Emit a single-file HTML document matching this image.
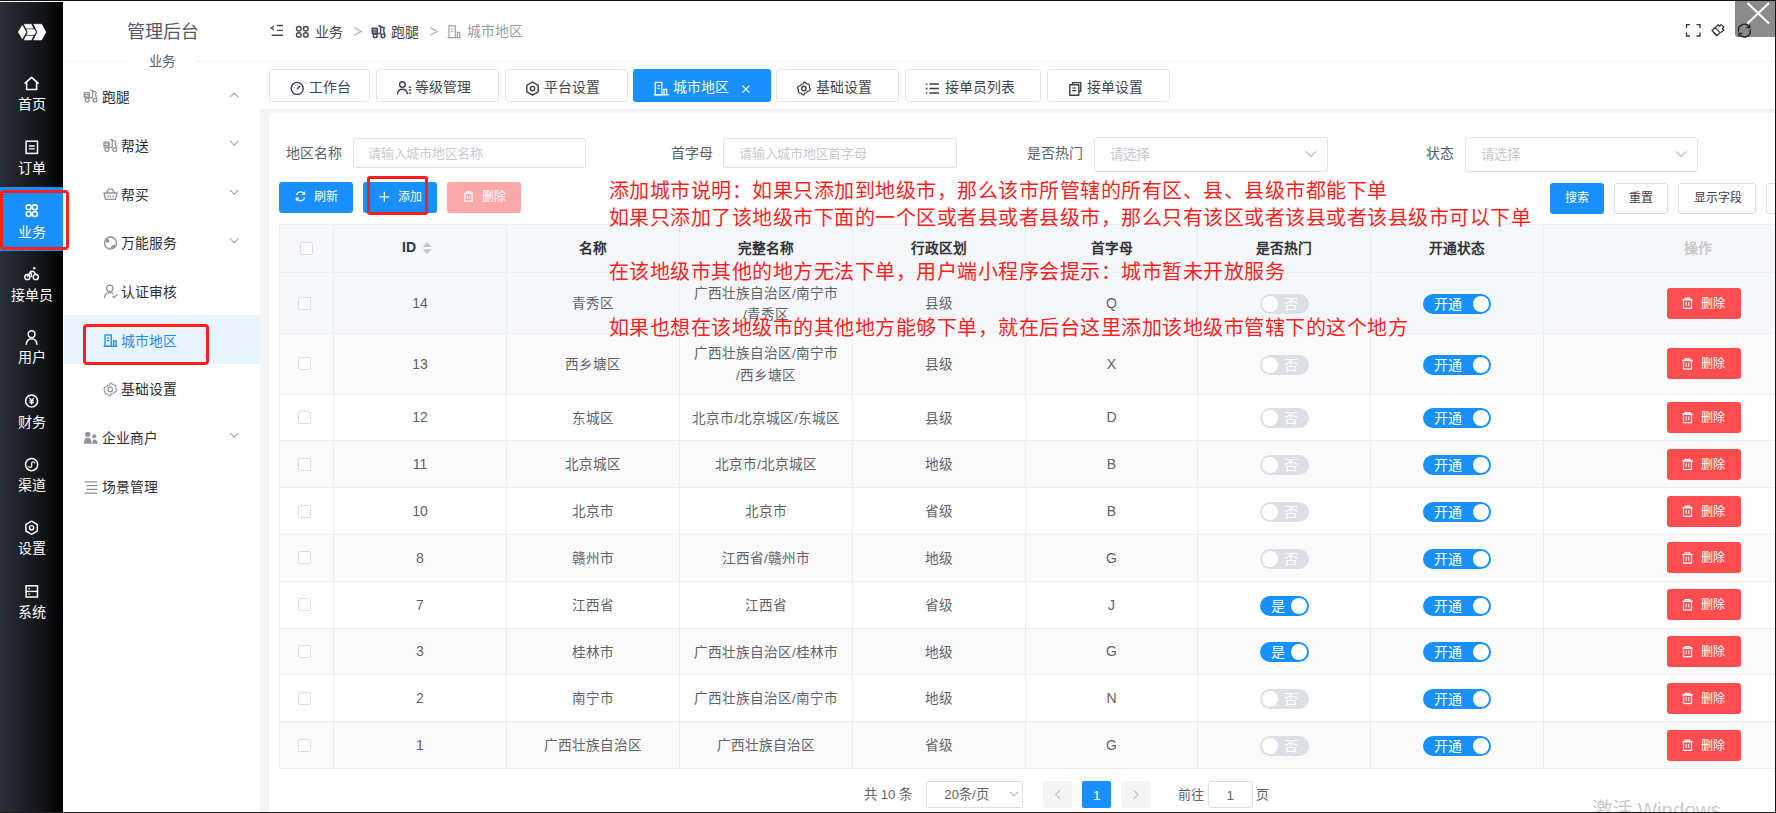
<!DOCTYPE html>
<html lang="zh-CN">
<head>
<meta charset="utf-8">
<title>城市地区</title>
<style>
*{box-sizing:border-box;margin:0;padding:0}
html,body{width:1776px;height:813px;overflow:hidden;background:#fff}
body{position:relative;font-family:"Liberation Sans",sans-serif;color:#606266;font-size:14px}
.a{position:absolute}
.t{position:absolute;white-space:nowrap;line-height:1}
</style>
</head>
<body>
<div class="a" style="left:0px;top:0px;width:1776px;height:1px;background:#141414"></div>
<div class="a" style="left:0px;top:2px;width:63px;height:810px;background:linear-gradient(to right,#2b2f38 0%,#1d2027 35%,#111316 70%,#000 100%)"></div>
<svg class="a" style="left:0px;top:0px;" width="63" height="60" viewBox="0 0 63 60" fill="none"><g fill="#fff" stroke="#fff" stroke-width="0.6" stroke-linejoin="round">
<polygon points="18.3,32.1 22.3,25.4 26.0,32.1 22.3,38.8"/>
<polygon points="24.2,24.3 31.2,24.3 33.1,28.2 26.0,28.2"/>
<polygon points="26.8,29.5 34.3,29.5 35.8,32.1 34.3,34.7 26.8,34.7 27.8,32.1"/>
<polygon points="26.0,36.0 33.1,36.0 31.2,39.9 24.2,39.9"/>
<polygon points="33.7,24.3 41.6,24.3 45.9,32.1 41.6,39.9 33.7,39.9 37.6,32.1"/>
</g></svg>
<div class="a" style="left:0px;top:187px;width:63px;height:64px;background:#1890ff"></div>
<svg class="a" style="left:0px;top:0px;" width="63" height="813" viewBox="0 0 63 813" fill="none"><path d="M24.6 83.6 L31.6 77.4 L38.6 83.6 M26.6 82.2 V89.5 H36.6 V82.2" stroke="#fff" stroke-width="1.6" stroke-linejoin="round"/><rect x="26.1" y="141.2" width="11.4" height="12.2" stroke="#fff" stroke-width="1.5"/><path d="M28.8 146 H34.8 M28.8 148.8 H34.8" stroke="#fff" stroke-width="1.3"/><g stroke="#fff" stroke-width="1.5"><circle cx="28.6" cy="207.2" r="2.5"/><circle cx="34.8" cy="207.2" r="2.5"/><circle cx="28.6" cy="214" r="2.5"/><circle cx="34.8" cy="214" r="2.5"/></g><g stroke="#fff" stroke-width="1.5"><circle cx="27.4" cy="277" r="2.6"/><circle cx="35.8" cy="277" r="2.6"/></g><circle cx="34.3" cy="268.2" r="1.3" fill="#fff"/><path d="M27.4 277 L30.6 271.3 L33.6 271.6 L35.8 274.2 M30.6 271.3 L31.8 277" stroke="#fff" stroke-width="1.5" stroke-linejoin="round"/><g stroke="#fff" stroke-width="1.5"><circle cx="31.6" cy="334.2" r="3.4"/><path d="M26.2 344.8 C26.6 340.5 28.8 338.8 31.6 338.8 C34.4 338.8 36.6 340.5 37 344.8"/></g><circle cx="31.6" cy="401" r="6" stroke="#fff" stroke-width="1.6"/><path d="M29.3 397.8 L31.6 400.6 L33.9 397.8 M31.6 400.6 V404.5 M29.4 400.9 H33.8 M29.4 402.7 H33.8" stroke="#fff" stroke-width="1.2"/><circle cx="31.6" cy="464.6" r="6.1" stroke="#fff" stroke-width="1.6"/><path d="M28.6 465.9 A1.55 1.55 0 1 0 31.7 465.9 V463.3 A1.55 1.55 0 1 1 34.8 463.3" stroke="#fff" stroke-width="1.2" fill="none"/><polygon points="31.6,521.2 37.3,524.5 37.3,531 31.6,534.3 25.9,531 25.9,524.5" stroke="#fff" stroke-width="1.5" stroke-linejoin="round"/><circle cx="31.6" cy="527.7" r="2.1" stroke="#fff" stroke-width="1.4"/><rect x="26.1" y="585.8" width="11.4" height="11.2" stroke="#fff" stroke-width="1.5"/><path d="M26.1 591.4 H37.5" stroke="#fff" stroke-width="1.4"/><path d="M28.5 588.6 H30 M28.5 594.2 H30" stroke="#fff" stroke-width="1.2"/></svg>
<div class="t" style="left:-268.4px;width:600px;text-align:center;top:96.5px;font-size:14px;color:#fff;font-weight:400;">首页</div>
<div class="t" style="left:-268.4px;width:600px;text-align:center;top:160.5px;font-size:14px;color:#fff;font-weight:400;">订单</div>
<div class="t" style="left:-268.4px;width:600px;text-align:center;top:224.5px;font-size:14px;color:#fff;font-weight:400;">业务</div>
<div class="t" style="left:-268.4px;width:600px;text-align:center;top:287.5px;font-size:14px;color:#fff;font-weight:400;">接单员</div>
<div class="t" style="left:-268.4px;width:600px;text-align:center;top:350px;font-size:14px;color:#fff;font-weight:400;">用户</div>
<div class="t" style="left:-268.4px;width:600px;text-align:center;top:414.5px;font-size:14px;color:#fff;font-weight:400;">财务</div>
<div class="t" style="left:-268.4px;width:600px;text-align:center;top:477.5px;font-size:14px;color:#fff;font-weight:400;">渠道</div>
<div class="t" style="left:-268.4px;width:600px;text-align:center;top:541px;font-size:14px;color:#fff;font-weight:400;">设置</div>
<div class="t" style="left:-268.4px;width:600px;text-align:center;top:604.5px;font-size:14px;color:#fff;font-weight:400;">系统</div>
<div class="a" style="left:63px;top:2px;width:197px;height:810px;background:#fff"></div>
<div class="a" style="left:259.5px;top:2px;width:1px;height:810px;background:#f0f1f4"></div>
<div class="t" style="left:127px;top:22.5px;font-size:18px;color:#4f586b;font-weight:400;">管理后台</div>
<div class="a" style="left:65px;top:61px;width:63px;height:1px;background:#f2f3f5"></div>
<div class="a" style="left:196px;top:61px;width:64px;height:1px;background:#f2f3f5"></div>
<div class="t" style="left:148.5px;top:55px;font-size:13.5px;color:#5c6270;font-weight:400;">业务</div>
<div class="a" style="left:63.5px;top:315px;width:196px;height:49px;background:#e8f4fe"></div>
<svg class="a" style="left:0px;top:0px;" width="263" height="813" viewBox="0 0 263 813" fill="none"><g stroke="#8f939a" stroke-width="1.25" fill="none" stroke-linejoin="round" stroke-linecap="round"><rect x="84.3" y="92.7" width="5" height="5.1"/><path d="M84.3 94.5 H89.3 M84.3 96.2 H89.3" stroke-width="1.0"/><path d="M90.8 90.3 H92.6 V97.8 H89.3"/><path d="M92.6 91.1 L96.2 92.2 L95.5 94.6 L96.8 99.0"/><circle cx="87.2" cy="100.2" r="1.9"/><circle cx="95.0" cy="100.2" r="1.9"/></g><g stroke="#8f939a" stroke-width="1.25" fill="none" stroke-linejoin="round" stroke-linecap="round"><rect x="104.0" y="142.0" width="5" height="5.1"/><path d="M104.0 143.8 H109.0 M104.0 145.5 H109.0" stroke-width="1.0"/><path d="M110.5 139.60000000000002 H112.3 V147.10000000000002 H109.0"/><path d="M112.3 140.4 L115.9 141.5 L115.2 143.9 L116.5 148.3"/><circle cx="106.9" cy="149.5" r="1.9"/><circle cx="114.7" cy="149.5" r="1.9"/></g><g stroke="#8f939a" stroke-width="1.3" fill="none" stroke-linejoin="round"><path d="M104 193 H117 L115.6 199.4 H105.4 Z"/><path d="M106.5 193 L108.8 189.2 H112.2 L114.5 193"/><path d="M108 195.2 V197.4 M110.5 195.2 V197.4 M113 195.2 V197.4" stroke-width="1.1"/></g><circle cx="110.5" cy="243" r="6" stroke="#8f939a" stroke-width="1.4"/><path d="M106 239.5 C108 238.5 110 239.5 109.5 241.5 C109 243 107 242.5 105.6 242.2 Z M111 247.5 C111.5 245.5 113.5 244.5 115.5 245 C115 247 113.5 248.5 111 248.8 Z" fill="#8f939a"/><g stroke="#8f939a" stroke-width="1.3" fill="none"><circle cx="109.8" cy="288.3" r="3.2"/><path d="M104.5 298 C104.8 294.5 107 292.6 109.8 292.6 C111.4 292.6 112.6 293 113.5 293.8"/><path d="M112.6 296 L114.2 297.6 L117.3 294.3"/></g><g stroke="#1890ff" stroke-width="1.3" fill="none"><path d="M103.6 346.3 H117.4"/><rect x="105" y="335" width="6.3" height="11.3"/><path d="M107 338 H109.5 M107 340.6 H109.5" stroke-width="1.1"/><path d="M113.6 346.3 V341 H116 V346.3"/></g><g stroke="#8f939a" stroke-width="1.3" fill="none"><path d="M110.3 383 L112 383.6 L113.2 385 L115 385.1 L116 386.8 L115.8 388.6 L116.8 390.2 L115.8 391.9 L114 392.2 L112.9 393.8 L111 394 L110.3 396 L108.6 395.4 L107.4 394 L105.6 393.9 L104.6 392.2 L104.8 390.4 L103.8 388.8 L104.8 387.1 L106.6 386.8 L107.7 385.2 L109.6 385 Z" stroke-width="1.1"/><circle cx="110.3" cy="389.5" r="2.3"/></g><g fill="#8f939a"><circle cx="87.8" cy="434.3" r="2.6"/><path d="M84 443.8 C84 439.5 85.5 437.8 87.8 437.8 C90.1 437.8 91.6 439.5 91.6 443.8 Z"/><circle cx="94.2" cy="436.3" r="2"/><path d="M92.4 443.8 C92.4 440.6 93 439.4 94.5 439.4 C96.2 439.4 97.4 440.6 97.4 443.8 Z"/></g><g stroke="#8f939a" stroke-width="1.3"><path d="M84.5 481.8 H97.3 M86.5 485.6 H97.3 M86.5 489.4 H97.3 M84.5 493.2 H97.3"/></g></svg>
<div class="t" style="left:102px;top:90.5px;font-size:13.8px;color:#2b2d31;font-weight:400;">跑腿</div>
<svg class="a" style="left:0px;top:0px;" width="263" height="813" viewBox="0 0 263 813" fill="none"><path d="M230 97.2 L234.2 93.0 L238.4 97.2" stroke="#a3a6ad" stroke-width="1.1" fill="none"/></svg>
<div class="t" style="left:121px;top:139.5px;font-size:13.8px;color:#2b2d31;font-weight:400;">帮送</div>
<svg class="a" style="left:0px;top:0px;" width="263" height="813" viewBox="0 0 263 813" fill="none"><path d="M230 140.9 L234.2 145.1 L238.4 140.9" stroke="#a3a6ad" stroke-width="1.1" fill="none"/></svg>
<div class="t" style="left:121px;top:188.5px;font-size:13.8px;color:#2b2d31;font-weight:400;">帮买</div>
<svg class="a" style="left:0px;top:0px;" width="263" height="813" viewBox="0 0 263 813" fill="none"><path d="M230 189.9 L234.2 194.1 L238.4 189.9" stroke="#a3a6ad" stroke-width="1.1" fill="none"/></svg>
<div class="t" style="left:121px;top:237px;font-size:13.8px;color:#2b2d31;font-weight:400;">万能服务</div>
<svg class="a" style="left:0px;top:0px;" width="263" height="813" viewBox="0 0 263 813" fill="none"><path d="M230 238.4 L234.2 242.6 L238.4 238.4" stroke="#a3a6ad" stroke-width="1.1" fill="none"/></svg>
<div class="t" style="left:121px;top:286px;font-size:13.8px;color:#2b2d31;font-weight:400;">认证审核</div>
<div class="t" style="left:121px;top:334.5px;font-size:13.8px;color:#1890ff;font-weight:400;">城市地区</div>
<div class="t" style="left:121px;top:383px;font-size:13.8px;color:#2b2d31;font-weight:400;">基础设置</div>
<div class="t" style="left:102px;top:431.5px;font-size:13.8px;color:#2b2d31;font-weight:400;">企业商户</div>
<svg class="a" style="left:0px;top:0px;" width="263" height="813" viewBox="0 0 263 813" fill="none"><path d="M230 432.90000000000003 L234.2 437.1 L238.4 432.90000000000003" stroke="#a3a6ad" stroke-width="1.1" fill="none"/></svg>
<div class="t" style="left:102px;top:480.5px;font-size:13.8px;color:#2b2d31;font-weight:400;">场景管理</div>
<div class="a" style="left:83.2px;top:324px;width:125.6px;height:40.8px;border:3px solid #ff1e1e;border-radius:4px"></div>
<div class="a" style="left:0px;top:189.5px;width:69px;height:60px;border:3px solid #ff1f1f;border-radius:4px"></div>
<div class="a" style="left:260px;top:1px;width:1515px;height:60px;background:#fff"></div>
<div class="a" style="left:260px;top:60.5px;width:1515px;height:1px;background:#f0f1f3"></div>
<svg class="a" style="left:0px;top:0px;" width="1776" height="120" viewBox="0 0 1776 120" fill="none"><g stroke="#464c58" stroke-width="1.4" fill="none"><path d="M274 26.3 L271 28 L274 29.8" stroke-linejoin="round"/><path d="M276.8 25.5 H283 M276.8 30.4 H283 M271.6 35.3 H283"/></g><g stroke="#464c58" stroke-width="1.5" fill="none"><circle cx="298.8" cy="28.8" r="2.3"/><circle cx="305.8" cy="28.8" r="2.3"/><circle cx="298.8" cy="35" r="2.3"/><circle cx="305.8" cy="35" r="2.3"/></g><g stroke="#464c58" stroke-width="1.5" fill="none" stroke-linejoin="round" stroke-linecap="round"><rect x="372.3" y="28.3" width="5" height="5.1"/><path d="M372.3 30.1 H377.3 M372.3 31.8 H377.3" stroke-width="1.2000000000000002"/><path d="M378.8 25.900000000000002 H380.6 V33.4 H377.3"/><path d="M380.6 26.700000000000003 L384.2 27.8 L383.5 30.200000000000003 L384.8 34.6"/><circle cx="375.2" cy="35.8" r="1.9"/><circle cx="383.0" cy="35.8" r="1.9"/></g><g stroke="#a9b4c4" stroke-width="1.2" fill="none"><path d="M354.3 27.6 L361.2 31.4 L354.3 35.2"/><path d="M430.3 27.6 L437.2 31.4 L430.3 35.2"/></g><g stroke="#9aa3b0" stroke-width="1.2" fill="none"><path d="M447.6 37.6 H461.2"/><rect x="449" y="25.8" width="6.3" height="11.8"/><path d="M451 29 H453.4 M451 31.7 H453.4" stroke-width="1"/><path d="M457.4 37.6 V32.3 H459.8 V37.6"/></g><g stroke="#3c3c3c" stroke-width="1.4" fill="none"><path d="M1686.5 28 V24.6 H1690 M1696.5 24.6 H1700 V28 M1700 32.5 V36 H1696.5 M1690 36 H1686.5 V32.5"/></g><g stroke="#3c3c3c" stroke-width="1.3" fill="none" stroke-linejoin="round"><path d="M1712 30.5 L1716.8 35.8 L1720 32.6 L1715 27.4 Z"/><path d="M1713.8 32.4 L1716.8 35.6" /><path d="M1715.2 27.6 L1718.2 24.6 L1719.6 26 L1721.2 24.6 L1723.8 27.2 L1722.4 28.8 L1724 30.2 L1720.4 32.8"/></g></svg>
<div class="t" style="left:314.5px;top:24.6px;font-size:14px;color:#3d4350;font-weight:400;">业务</div>
<div class="t" style="left:390.7px;top:24.6px;font-size:14px;color:#3d4350;font-weight:400;">跑腿</div>
<div class="t" style="left:466.7px;top:24.6px;font-size:13.8px;color:#97a0ad;font-weight:400;">城市地区</div>
<div class="a" style="left:1734.7px;top:1px;width:40.3px;height:35.7px;background:rgba(110,110,110,0.8);border-bottom-left-radius:3px"></div>
<svg class="a" style="left:1734px;top:0px;" width="42" height="40" viewBox="0 0 42 40" fill="none"><path d="M13.5 3 L35 23.5 M35 3 L13.5 23.5" stroke="#fff" stroke-width="2.2"/></svg>
<svg class="a" style="left:0px;top:0px;" width="1776" height="60" viewBox="0 0 1776 60" fill="none"><g stroke="#222" stroke-width="1.4" fill="none"><path d="M1738.6 31.5 A5.8 5.8 0 0 1 1749 26.8"/><path d="M1750 29.5 A5.8 5.8 0 0 1 1739.8 34.6"/><path d="M1749.6 24.4 V27.6 H1746.4" /><path d="M1739 36.4 V33.4 H1742.2"/></g></svg>
<div class="a" style="left:260px;top:61.5px;width:1515px;height:48.5px;background:#fff"></div>
<div class="a" style="left:260px;top:109px;width:1515px;height:3.5px;background:linear-gradient(#eceef1,#f3f4f6)"></div>
<div class="a" style="left:269px;top:69.3px;width:101.39999999999998px;height:32.7px;background:#fff;border:1px solid #e3e6eb;border-radius:3px"></div>
<div class="t" style="left:309px;top:81px;font-size:13.9px;color:#41464f;font-weight:400;">工作台</div>
<div class="a" style="left:376px;top:69.3px;width:123.30000000000001px;height:32.7px;background:#fff;border:1px solid #e3e6eb;border-radius:3px"></div>
<div class="t" style="left:415px;top:81px;font-size:13.9px;color:#41464f;font-weight:400;">等级管理</div>
<div class="a" style="left:504.8px;top:69.3px;width:123.09999999999997px;height:32.7px;background:#fff;border:1px solid #e3e6eb;border-radius:3px"></div>
<div class="t" style="left:544.3px;top:81px;font-size:13.9px;color:#41464f;font-weight:400;">平台设置</div>
<div class="a" style="left:633.4px;top:69.3px;width:137.39999999999998px;height:32.7px;background:#1890ff;border-radius:3px"></div>
<div class="t" style="left:672.9px;top:81px;font-size:13.9px;color:#fff;font-weight:400;">城市地区</div>
<div class="a" style="left:776.3px;top:69.3px;width:122.90000000000009px;height:32.7px;background:#fff;border:1px solid #e3e6eb;border-radius:3px"></div>
<div class="t" style="left:815.7px;top:81px;font-size:13.9px;color:#41464f;font-weight:400;">基础设置</div>
<div class="a" style="left:905px;top:69.3px;width:136.20000000000005px;height:32.7px;background:#fff;border:1px solid #e3e6eb;border-radius:3px"></div>
<div class="t" style="left:944.6px;top:81px;font-size:13.9px;color:#41464f;font-weight:400;">接单员列表</div>
<div class="a" style="left:1047.3px;top:69.3px;width:123.0px;height:32.7px;background:#fff;border:1px solid #e3e6eb;border-radius:3px"></div>
<div class="t" style="left:1086.9px;top:81px;font-size:13.9px;color:#41464f;font-weight:400;">接单设置</div>
<svg class="a" style="left:0px;top:0.7px;" width="1776" height="120" viewBox="0 0 1776 120" fill="none"><g stroke="#3a3f48" stroke-width="1.4" fill="none"><circle cx="297.2" cy="87.4" r="6"/><path d="M297.2 88 L300 85" stroke-width="1.6"/><path d="M293.8 86.5 L294.6 86.8 M295 84.4 L295.5 85 M297.2 83.6 V84.4" stroke-width="1"/></g><g stroke="#3a3f48" stroke-width="1.4" fill="none"><circle cx="402.4" cy="83.6" r="2.8"/><path d="M397.4 93.4 C397.6 89.8 399.6 88.2 402.4 88.2 C405.2 88.2 407.2 89.8 407.4 93.4"/><path d="M408.6 86.2 H411.2 M408.6 89.2 H411.2 M408.6 92.2 H411.2" stroke-width="1.3"/></g><g stroke="#3a3f48" stroke-width="1.4" fill="none"><polygon points="532.5,81 538.2,84.3 538.2,90.9 532.5,94.2 526.8,90.9 526.8,84.3" stroke-linejoin="round"/><circle cx="532.5" cy="87.6" r="2.2"/></g><g stroke="#fff" stroke-width="1.3" fill="none"><path d="M653.8 93.8 H668.6"/><rect x="655.3" y="81.4" width="6.5" height="12.4"/><path d="M657.4 84.6 H659.8 M657.4 87.4 H659.8" stroke-width="1.1"/><path d="M664 93.8 V88.4 H666.6 V93.8"/></g><path d="M742.4 84.6 L749.4 91.6 M749.4 84.6 L742.4 91.6" stroke="#fff" stroke-width="1.2"/><g stroke="#3a3f48" stroke-width="1.2" fill="none"><path d="M803.9 81 L805.6 81.6 L806.8 83 L808.6 83.1 L809.6 84.8 L809.4 86.6 L810.4 88.2 L809.4 89.9 L807.6 90.2 L806.5 91.8 L804.6 92 L803.9 94 L802.2 93.4 L801 92 L799.2 91.9 L798.2 90.2 L798.4 88.4 L797.4 86.8 L798.4 85.1 L800.2 84.8 L801.3 83.2 L803.2 83 Z"/><circle cx="803.9" cy="87.5" r="2.2" stroke-width="1.4"/></g><g stroke="#3a3f48" stroke-width="1.5" fill="none"><path d="M926.6 82.4 V83.8 M926.6 86.8 V88.2 M926.6 91.2 V92.6" stroke-width="1.7"/><path d="M929.4 83.1 H939 M929.4 87.5 H939 M929.4 91.9 H939"/></g><g stroke="#3a3f48" stroke-width="1.4" fill="none" stroke-linejoin="round"><path d="M1072.6 83.6 V81.6 H1080.8 V90.2 H1078.8"/><rect x="1069.8" y="83.8" width="9" height="10.4"/><path d="M1072.2 87 H1076.2 M1072.2 89.6 H1076.2" stroke-width="1.2"/></g></svg>
<div class="a" style="left:260px;top:112.5px;width:1515px;height:699.5px;background:#f3f4f6"></div>
<div class="a" style="left:269px;top:112.5px;width:1506px;height:699.5px;background:#fff"></div>
<div class="t" style="left:286px;top:146.8px;font-size:13.9px;color:#5a5f69;font-weight:400;">地区名称</div>
<div class="a" style="left:352.5px;top:138px;width:233.29999999999995px;height:30.400000000000006px;background:#fff;border:1px solid #dfe2e8;border-radius:3px"></div>
<div class="t" style="left:368px;top:146.8px;font-size:13px;color:#c8cbd1;font-weight:400;letter-spacing:-0.25px">请输入城市地区名称</div>
<div class="t" style="left:670.5px;top:146.8px;font-size:13.9px;color:#5a5f69;font-weight:400;">首字母</div>
<div class="a" style="left:723.4px;top:138px;width:233.60000000000002px;height:30.400000000000006px;background:#fff;border:1px solid #dfe2e8;border-radius:3px"></div>
<div class="t" style="left:739px;top:146.8px;font-size:13px;color:#c8cbd1;font-weight:400;letter-spacing:-0.25px">请输入城市地区首字母</div>
<div class="t" style="left:1027.4px;top:146.6px;font-size:13.9px;color:#5a5f69;font-weight:400;">是否热门</div>
<div class="a" style="left:1094.4px;top:137.1px;width:233.19999999999982px;height:34.70000000000002px;background:#fff;border:1px solid #dfe2e8;border-radius:3px"></div>
<div class="t" style="left:1110px;top:147.8px;font-size:13.5px;color:#c5c8ce;font-weight:400;">请选择</div>
<div class="t" style="left:1425.8px;top:146.8px;font-size:13.9px;color:#5a5f69;font-weight:400;">状态</div>
<div class="a" style="left:1465px;top:137.1px;width:233.20000000000005px;height:34.70000000000002px;background:#fff;border:1px solid #dfe2e8;border-radius:3px"></div>
<div class="t" style="left:1481px;top:147.8px;font-size:13.5px;color:#c5c8ce;font-weight:400;">请选择</div>
<svg class="a" style="left:0px;top:0px;" width="1776" height="200" viewBox="0 0 1776 200" fill="none"><g stroke="#b4b8bf" stroke-width="1.1" fill="none"><path d="M1305.8 151.4 L1311 156.4 L1316.2 151.4"/><path d="M1676 151.4 L1681.2 156.4 L1686.4 151.4"/></g></svg>
<div class="a" style="left:279px;top:181.6px;width:73.8px;height:31.2px;background:#1890ff;border-radius:3px"></div>
<div class="a" style="left:363px;top:181.6px;width:73.9px;height:31.2px;background:#1890ff;border-radius:3px"></div>
<div class="a" style="left:447px;top:181.6px;width:74px;height:31.2px;background:#fda8a8;border-radius:3px"></div>
<div class="t" style="left:314.1px;top:190.8px;font-size:12px;color:#fff;font-weight:400;">刷新</div>
<div class="t" style="left:398.2px;top:190.8px;font-size:12px;color:#fff;font-weight:400;">添加</div>
<div class="t" style="left:482px;top:190.8px;font-size:12px;color:#fff;font-weight:400;">删除</div>
<svg class="a" style="left:0px;top:0px;" width="1776" height="230" viewBox="0 0 1776 230" fill="none"><g stroke="#fff" stroke-width="1.3" fill="none"><path d="M296.6 195.2 A4.2 4.2 0 0 1 304 193.4"/><path d="M304.6 197.6 A4.2 4.2 0 0 1 297.2 199.2"/><path d="M304.6 191.8 V194.4 H302"/><path d="M296.4 200.8 V198.2 H299"/></g><path d="M384.4 191.8 V201.8 M379.4 196.8 H389.4" stroke="#fff" stroke-width="1.2"/><g stroke="#fff" stroke-width="1.2" fill="none"><path d="M463.8 193.4 H473.2 M466.4 193.4 V191.9 H470.6 V193.4"/><rect x="464.9" y="193.4" width="7.2" height="7.8"/><path d="M467.4 195.6 V199 M469.6 195.6 V199" stroke-width="1"/></g></svg>
<div class="a" style="left:367px;top:175.8px;width:61.3px;height:39.4px;border:3px solid #ff1c1c;border-radius:3px"></div>
<div class="a" style="left:1549.7px;top:182.6px;width:54.3px;height:31px;background:#1890ff;border-radius:3px"></div>
<div class="t" style="left:1565px;top:192.2px;font-size:12px;color:#fff;font-weight:400;">搜索</div>
<div class="a" style="left:1614px;top:182.6px;width:54.4px;height:31px;background:#fff;border:1px solid #dcdfe6;border-radius:3px"></div>
<div class="t" style="left:1629.4px;top:192.2px;font-size:12px;color:#3c4048;font-weight:400;">重置</div>
<div class="a" style="left:1678px;top:182.6px;width:78px;height:31px;background:#fff;border:1px solid #dcdfe6;border-radius:3px"></div>
<div class="t" style="left:1694px;top:192.2px;font-size:12px;color:#3c4048;font-weight:400;">显示字段</div>
<div class="a" style="left:1766px;top:182.6px;width:20px;height:31px;background:#fff;border:1px solid #dcdfe6;border-radius:3px"></div>
<div class="a" style="left:279px;top:224px;width:1496px;height:48px;background:#f5f7fa"></div>
<div class="a" style="left:279px;top:272px;width:1496px;height:61px;background:#f5f7fa"></div>
<div class="a" style="left:279px;top:333px;width:1496px;height:60.5px;background:#fafafa"></div>
<div class="a" style="left:279px;top:393.5px;width:1496px;height:46.80000000000001px;background:#fff"></div>
<div class="a" style="left:279px;top:440.3px;width:1496px;height:46.80000000000001px;background:#fafafa"></div>
<div class="a" style="left:279px;top:487.1px;width:1496px;height:46.799999999999955px;background:#fff"></div>
<div class="a" style="left:279px;top:533.9px;width:1496px;height:46.80000000000007px;background:#fafafa"></div>
<div class="a" style="left:279px;top:580.7px;width:1496px;height:46.799999999999955px;background:#fff"></div>
<div class="a" style="left:279px;top:627.5px;width:1496px;height:46.799999999999955px;background:#fafafa"></div>
<div class="a" style="left:279px;top:674.3px;width:1496px;height:46.80000000000007px;background:#fff"></div>
<div class="a" style="left:279px;top:721.1px;width:1496px;height:46.89999999999998px;background:#fafafa"></div>
<div class="a" style="left:279px;top:224px;width:1496px;height:1px;background:#ebeef5"></div>
<div class="a" style="left:279px;top:272px;width:1496px;height:1px;background:#ebeef5"></div>
<div class="a" style="left:279px;top:333px;width:1496px;height:1px;background:#ebeef5"></div>
<div class="a" style="left:279px;top:393.5px;width:1496px;height:1px;background:#ebeef5"></div>
<div class="a" style="left:279px;top:440.3px;width:1496px;height:1px;background:#ebeef5"></div>
<div class="a" style="left:279px;top:487.1px;width:1496px;height:1px;background:#ebeef5"></div>
<div class="a" style="left:279px;top:533.9px;width:1496px;height:1px;background:#ebeef5"></div>
<div class="a" style="left:279px;top:580.7px;width:1496px;height:1px;background:#ebeef5"></div>
<div class="a" style="left:279px;top:627.5px;width:1496px;height:1px;background:#ebeef5"></div>
<div class="a" style="left:279px;top:674.3px;width:1496px;height:1px;background:#ebeef5"></div>
<div class="a" style="left:279px;top:721.1px;width:1496px;height:1px;background:#ebeef5"></div>
<div class="a" style="left:279px;top:768px;width:1496px;height:1px;background:#ebeef5"></div>
<div class="a" style="left:279px;top:224px;width:1px;height:545px;background:#ebeef5"></div>
<div class="a" style="left:333px;top:224px;width:1px;height:545px;background:#ebeef5"></div>
<div class="a" style="left:506px;top:224px;width:1px;height:545px;background:#ebeef5"></div>
<div class="a" style="left:679px;top:224px;width:1px;height:545px;background:#ebeef5"></div>
<div class="a" style="left:852px;top:224px;width:1px;height:545px;background:#ebeef5"></div>
<div class="a" style="left:1025px;top:224px;width:1px;height:545px;background:#ebeef5"></div>
<div class="a" style="left:1197px;top:224px;width:1px;height:545px;background:#ebeef5"></div>
<div class="a" style="left:1370px;top:224px;width:1px;height:545px;background:#ebeef5"></div>
<div class="a" style="left:1543px;top:224px;width:1px;height:545px;background:#ebeef5"></div>
<div class="t" style="left:402px;top:240px;font-size:14px;color:#2f3238;font-weight:700;">ID</div>
<svg class="a" style="left:0px;top:0px;" width="1776" height="300" viewBox="0 0 1776 300" fill="none"><path d="M422.6 247 L427.2 242.2 L431.8 247 Z M422.6 249.2 L427.2 254 L431.8 249.2 Z" fill="#c0c4cc"/></svg>
<div class="t" style="left:293.0px;width:600px;text-align:center;top:242px;font-size:13.7px;color:#2f3238;font-weight:700;">名称</div>
<div class="t" style="left:466.0px;width:600px;text-align:center;top:242px;font-size:13.7px;color:#2f3238;font-weight:700;">完整名称</div>
<div class="t" style="left:639.0px;width:600px;text-align:center;top:242px;font-size:13.7px;color:#2f3238;font-weight:700;">行政区划</div>
<div class="t" style="left:811.5px;width:600px;text-align:center;top:242px;font-size:13.7px;color:#2f3238;font-weight:700;">首字母</div>
<div class="t" style="left:984.0px;width:600px;text-align:center;top:242px;font-size:13.7px;color:#2f3238;font-weight:700;">是否热门</div>
<div class="t" style="left:1157.0px;width:600px;text-align:center;top:242px;font-size:13.7px;color:#2f3238;font-weight:700;">开通状态</div>
<div class="t" style="left:1398.4px;width:600px;text-align:center;top:242.2px;font-size:13.9px;color:#c8c8c8;font-weight:700;">操作</div>
<div class="a" style="left:300px;top:242px;width:13px;height:13px;background:#fff;border:1px solid #dcdfe6;border-radius:2px"></div>
<div class="a" style="left:298px;top:296.5px;width:13px;height:13px;background:#fff;border:1px solid #dcdfe6;border-radius:2px"></div>
<div class="t" style="left:120.0px;width:600px;text-align:center;top:296.0px;font-size:14px;color:#5f6369;font-weight:400;">14</div>
<div class="t" style="left:293.0px;width:600px;text-align:center;top:297.2px;font-size:13.6px;color:#5f6369;font-weight:400;">青秀区</div>
<div class="t" style="left:466.0px;width:600px;text-align:center;top:286.7px;font-size:13.6px;color:#5f6369;font-weight:400;">广西壮族自治区/南宁市</div>
<div class="t" style="left:466.0px;width:600px;text-align:center;top:308.2px;font-size:13.6px;color:#5f6369;font-weight:400;">/青秀区</div>
<div class="t" style="left:639.0px;width:600px;text-align:center;top:297.2px;font-size:13.6px;color:#5f6369;font-weight:400;">县级</div>
<div class="t" style="left:811.5px;width:600px;text-align:center;top:296.0px;font-size:14px;color:#5f6369;font-weight:400;">Q</div>
<div class="a" style="left:1259.7px;top:294.0px;width:49px;height:20px;background:#dcdfe6;border-radius:10px"></div>
<div class="a" style="left:1261.7px;top:296.0px;width:16px;height:16px;background:#fff;border-radius:50%"></div>
<div class="t" style="left:1284.1000000000001px;top:297.0px;font-size:14px;color:#fff;font-weight:400;">否</div>
<div class="a" style="left:1422.8px;top:294.0px;width:68px;height:20px;background:#1890ff;border-radius:10px"></div>
<div class="a" style="left:1472.8px;top:296.0px;width:16px;height:16px;background:#fff;border-radius:50%"></div>
<div class="t" style="left:1433.8px;top:297.0px;font-size:14px;color:#fff;font-weight:400;">开通</div>
<div class="a" style="left:1667px;top:287.5px;width:74px;height:31px;background:#ff4d50;border-radius:3px"></div>
<div class="t" style="left:1701px;top:297.5px;font-size:12px;color:#fff;font-weight:400;">删除</div>
<div class="a" style="left:298px;top:357.25px;width:13px;height:13px;background:#fff;border:1px solid #dcdfe6;border-radius:2px"></div>
<div class="t" style="left:120.0px;width:600px;text-align:center;top:356.75px;font-size:14px;color:#5f6369;font-weight:400;">13</div>
<div class="t" style="left:293.0px;width:600px;text-align:center;top:357.95px;font-size:13.6px;color:#5f6369;font-weight:400;">西乡塘区</div>
<div class="t" style="left:466.0px;width:600px;text-align:center;top:347.45px;font-size:13.6px;color:#5f6369;font-weight:400;">广西壮族自治区/南宁市</div>
<div class="t" style="left:466.0px;width:600px;text-align:center;top:368.95px;font-size:13.6px;color:#5f6369;font-weight:400;">/西乡塘区</div>
<div class="t" style="left:639.0px;width:600px;text-align:center;top:357.95px;font-size:13.6px;color:#5f6369;font-weight:400;">县级</div>
<div class="t" style="left:811.5px;width:600px;text-align:center;top:356.75px;font-size:14px;color:#5f6369;font-weight:400;">X</div>
<div class="a" style="left:1259.7px;top:354.75px;width:49px;height:20px;background:#dcdfe6;border-radius:10px"></div>
<div class="a" style="left:1261.7px;top:356.75px;width:16px;height:16px;background:#fff;border-radius:50%"></div>
<div class="t" style="left:1284.1000000000001px;top:357.75px;font-size:14px;color:#fff;font-weight:400;">否</div>
<div class="a" style="left:1422.8px;top:354.75px;width:68px;height:20px;background:#1890ff;border-radius:10px"></div>
<div class="a" style="left:1472.8px;top:356.75px;width:16px;height:16px;background:#fff;border-radius:50%"></div>
<div class="t" style="left:1433.8px;top:357.75px;font-size:14px;color:#fff;font-weight:400;">开通</div>
<div class="a" style="left:1667px;top:348.25px;width:74px;height:31px;background:#ff4d50;border-radius:3px"></div>
<div class="t" style="left:1701px;top:358.25px;font-size:12px;color:#fff;font-weight:400;">删除</div>
<div class="a" style="left:298px;top:410.9px;width:13px;height:13px;background:#fff;border:1px solid #dcdfe6;border-radius:2px"></div>
<div class="t" style="left:120.0px;width:600px;text-align:center;top:410.4px;font-size:14px;color:#5f6369;font-weight:400;">12</div>
<div class="t" style="left:293.0px;width:600px;text-align:center;top:411.59999999999997px;font-size:13.6px;color:#5f6369;font-weight:400;">东城区</div>
<div class="t" style="left:466.0px;width:600px;text-align:center;top:411.59999999999997px;font-size:13.6px;color:#5f6369;font-weight:400;">北京市/北京城区/东城区</div>
<div class="t" style="left:639.0px;width:600px;text-align:center;top:411.59999999999997px;font-size:13.6px;color:#5f6369;font-weight:400;">县级</div>
<div class="t" style="left:811.5px;width:600px;text-align:center;top:410.4px;font-size:14px;color:#5f6369;font-weight:400;">D</div>
<div class="a" style="left:1259.7px;top:408.4px;width:49px;height:20px;background:#dcdfe6;border-radius:10px"></div>
<div class="a" style="left:1261.7px;top:410.4px;width:16px;height:16px;background:#fff;border-radius:50%"></div>
<div class="t" style="left:1284.1000000000001px;top:411.4px;font-size:14px;color:#fff;font-weight:400;">否</div>
<div class="a" style="left:1422.8px;top:408.4px;width:68px;height:20px;background:#1890ff;border-radius:10px"></div>
<div class="a" style="left:1472.8px;top:410.4px;width:16px;height:16px;background:#fff;border-radius:50%"></div>
<div class="t" style="left:1433.8px;top:411.4px;font-size:14px;color:#fff;font-weight:400;">开通</div>
<div class="a" style="left:1667px;top:401.9px;width:74px;height:31px;background:#ff4d50;border-radius:3px"></div>
<div class="t" style="left:1701px;top:411.9px;font-size:12px;color:#fff;font-weight:400;">删除</div>
<div class="a" style="left:298px;top:457.70000000000005px;width:13px;height:13px;background:#fff;border:1px solid #dcdfe6;border-radius:2px"></div>
<div class="t" style="left:120.0px;width:600px;text-align:center;top:457.20000000000005px;font-size:14px;color:#5f6369;font-weight:400;">11</div>
<div class="t" style="left:293.0px;width:600px;text-align:center;top:458.40000000000003px;font-size:13.6px;color:#5f6369;font-weight:400;">北京城区</div>
<div class="t" style="left:466.0px;width:600px;text-align:center;top:458.40000000000003px;font-size:13.6px;color:#5f6369;font-weight:400;">北京市/北京城区</div>
<div class="t" style="left:639.0px;width:600px;text-align:center;top:458.40000000000003px;font-size:13.6px;color:#5f6369;font-weight:400;">地级</div>
<div class="t" style="left:811.5px;width:600px;text-align:center;top:457.20000000000005px;font-size:14px;color:#5f6369;font-weight:400;">B</div>
<div class="a" style="left:1259.7px;top:455.20000000000005px;width:49px;height:20px;background:#dcdfe6;border-radius:10px"></div>
<div class="a" style="left:1261.7px;top:457.20000000000005px;width:16px;height:16px;background:#fff;border-radius:50%"></div>
<div class="t" style="left:1284.1000000000001px;top:458.20000000000005px;font-size:14px;color:#fff;font-weight:400;">否</div>
<div class="a" style="left:1422.8px;top:455.20000000000005px;width:68px;height:20px;background:#1890ff;border-radius:10px"></div>
<div class="a" style="left:1472.8px;top:457.20000000000005px;width:16px;height:16px;background:#fff;border-radius:50%"></div>
<div class="t" style="left:1433.8px;top:458.20000000000005px;font-size:14px;color:#fff;font-weight:400;">开通</div>
<div class="a" style="left:1667px;top:448.70000000000005px;width:74px;height:31px;background:#ff4d50;border-radius:3px"></div>
<div class="t" style="left:1701px;top:458.70000000000005px;font-size:12px;color:#fff;font-weight:400;">删除</div>
<div class="a" style="left:298px;top:504.5px;width:13px;height:13px;background:#fff;border:1px solid #dcdfe6;border-radius:2px"></div>
<div class="t" style="left:120.0px;width:600px;text-align:center;top:504.0px;font-size:14px;color:#5f6369;font-weight:400;">10</div>
<div class="t" style="left:293.0px;width:600px;text-align:center;top:505.2px;font-size:13.6px;color:#5f6369;font-weight:400;">北京市</div>
<div class="t" style="left:466.0px;width:600px;text-align:center;top:505.2px;font-size:13.6px;color:#5f6369;font-weight:400;">北京市</div>
<div class="t" style="left:639.0px;width:600px;text-align:center;top:505.2px;font-size:13.6px;color:#5f6369;font-weight:400;">省级</div>
<div class="t" style="left:811.5px;width:600px;text-align:center;top:504.0px;font-size:14px;color:#5f6369;font-weight:400;">B</div>
<div class="a" style="left:1259.7px;top:502.0px;width:49px;height:20px;background:#dcdfe6;border-radius:10px"></div>
<div class="a" style="left:1261.7px;top:504.0px;width:16px;height:16px;background:#fff;border-radius:50%"></div>
<div class="t" style="left:1284.1000000000001px;top:505.0px;font-size:14px;color:#fff;font-weight:400;">否</div>
<div class="a" style="left:1422.8px;top:502.0px;width:68px;height:20px;background:#1890ff;border-radius:10px"></div>
<div class="a" style="left:1472.8px;top:504.0px;width:16px;height:16px;background:#fff;border-radius:50%"></div>
<div class="t" style="left:1433.8px;top:505.0px;font-size:14px;color:#fff;font-weight:400;">开通</div>
<div class="a" style="left:1667px;top:495.5px;width:74px;height:31px;background:#ff4d50;border-radius:3px"></div>
<div class="t" style="left:1701px;top:505.5px;font-size:12px;color:#fff;font-weight:400;">删除</div>
<div class="a" style="left:298px;top:551.3px;width:13px;height:13px;background:#fff;border:1px solid #dcdfe6;border-radius:2px"></div>
<div class="t" style="left:120.0px;width:600px;text-align:center;top:550.8px;font-size:14px;color:#5f6369;font-weight:400;">8</div>
<div class="t" style="left:293.0px;width:600px;text-align:center;top:552.0px;font-size:13.6px;color:#5f6369;font-weight:400;">赣州市</div>
<div class="t" style="left:466.0px;width:600px;text-align:center;top:552.0px;font-size:13.6px;color:#5f6369;font-weight:400;">江西省/赣州市</div>
<div class="t" style="left:639.0px;width:600px;text-align:center;top:552.0px;font-size:13.6px;color:#5f6369;font-weight:400;">地级</div>
<div class="t" style="left:811.5px;width:600px;text-align:center;top:550.8px;font-size:14px;color:#5f6369;font-weight:400;">G</div>
<div class="a" style="left:1259.7px;top:548.8px;width:49px;height:20px;background:#dcdfe6;border-radius:10px"></div>
<div class="a" style="left:1261.7px;top:550.8px;width:16px;height:16px;background:#fff;border-radius:50%"></div>
<div class="t" style="left:1284.1000000000001px;top:551.8px;font-size:14px;color:#fff;font-weight:400;">否</div>
<div class="a" style="left:1422.8px;top:548.8px;width:68px;height:20px;background:#1890ff;border-radius:10px"></div>
<div class="a" style="left:1472.8px;top:550.8px;width:16px;height:16px;background:#fff;border-radius:50%"></div>
<div class="t" style="left:1433.8px;top:551.8px;font-size:14px;color:#fff;font-weight:400;">开通</div>
<div class="a" style="left:1667px;top:542.3px;width:74px;height:31px;background:#ff4d50;border-radius:3px"></div>
<div class="t" style="left:1701px;top:552.3px;font-size:12px;color:#fff;font-weight:400;">删除</div>
<div class="a" style="left:298px;top:598.1px;width:13px;height:13px;background:#fff;border:1px solid #dcdfe6;border-radius:2px"></div>
<div class="t" style="left:120.0px;width:600px;text-align:center;top:597.6px;font-size:14px;color:#5f6369;font-weight:400;">7</div>
<div class="t" style="left:293.0px;width:600px;text-align:center;top:598.8000000000001px;font-size:13.6px;color:#5f6369;font-weight:400;">江西省</div>
<div class="t" style="left:466.0px;width:600px;text-align:center;top:598.8000000000001px;font-size:13.6px;color:#5f6369;font-weight:400;">江西省</div>
<div class="t" style="left:639.0px;width:600px;text-align:center;top:598.8000000000001px;font-size:13.6px;color:#5f6369;font-weight:400;">省级</div>
<div class="t" style="left:811.5px;width:600px;text-align:center;top:597.6px;font-size:14px;color:#5f6369;font-weight:400;">J</div>
<div class="a" style="left:1259.7px;top:595.6px;width:49px;height:20px;background:#1890ff;border-radius:10px"></div>
<div class="a" style="left:1290.7px;top:597.6px;width:16px;height:16px;background:#fff;border-radius:50%"></div>
<div class="t" style="left:1271.2px;top:598.6px;font-size:14px;color:#fff;font-weight:400;">是</div>
<div class="a" style="left:1422.8px;top:595.6px;width:68px;height:20px;background:#1890ff;border-radius:10px"></div>
<div class="a" style="left:1472.8px;top:597.6px;width:16px;height:16px;background:#fff;border-radius:50%"></div>
<div class="t" style="left:1433.8px;top:598.6px;font-size:14px;color:#fff;font-weight:400;">开通</div>
<div class="a" style="left:1667px;top:589.1px;width:74px;height:31px;background:#ff4d50;border-radius:3px"></div>
<div class="t" style="left:1701px;top:599.1px;font-size:12px;color:#fff;font-weight:400;">删除</div>
<div class="a" style="left:298px;top:644.9px;width:13px;height:13px;background:#fff;border:1px solid #dcdfe6;border-radius:2px"></div>
<div class="t" style="left:120.0px;width:600px;text-align:center;top:644.4px;font-size:14px;color:#5f6369;font-weight:400;">3</div>
<div class="t" style="left:293.0px;width:600px;text-align:center;top:645.6px;font-size:13.6px;color:#5f6369;font-weight:400;">桂林市</div>
<div class="t" style="left:466.0px;width:600px;text-align:center;top:645.6px;font-size:13.6px;color:#5f6369;font-weight:400;">广西壮族自治区/桂林市</div>
<div class="t" style="left:639.0px;width:600px;text-align:center;top:645.6px;font-size:13.6px;color:#5f6369;font-weight:400;">地级</div>
<div class="t" style="left:811.5px;width:600px;text-align:center;top:644.4px;font-size:14px;color:#5f6369;font-weight:400;">G</div>
<div class="a" style="left:1259.7px;top:642.4px;width:49px;height:20px;background:#1890ff;border-radius:10px"></div>
<div class="a" style="left:1290.7px;top:644.4px;width:16px;height:16px;background:#fff;border-radius:50%"></div>
<div class="t" style="left:1271.2px;top:645.4px;font-size:14px;color:#fff;font-weight:400;">是</div>
<div class="a" style="left:1422.8px;top:642.4px;width:68px;height:20px;background:#1890ff;border-radius:10px"></div>
<div class="a" style="left:1472.8px;top:644.4px;width:16px;height:16px;background:#fff;border-radius:50%"></div>
<div class="t" style="left:1433.8px;top:645.4px;font-size:14px;color:#fff;font-weight:400;">开通</div>
<div class="a" style="left:1667px;top:635.9px;width:74px;height:31px;background:#ff4d50;border-radius:3px"></div>
<div class="t" style="left:1701px;top:645.9px;font-size:12px;color:#fff;font-weight:400;">删除</div>
<div class="a" style="left:298px;top:691.7px;width:13px;height:13px;background:#fff;border:1px solid #dcdfe6;border-radius:2px"></div>
<div class="t" style="left:120.0px;width:600px;text-align:center;top:691.2px;font-size:14px;color:#5f6369;font-weight:400;">2</div>
<div class="t" style="left:293.0px;width:600px;text-align:center;top:692.4000000000001px;font-size:13.6px;color:#5f6369;font-weight:400;">南宁市</div>
<div class="t" style="left:466.0px;width:600px;text-align:center;top:692.4000000000001px;font-size:13.6px;color:#5f6369;font-weight:400;">广西壮族自治区/南宁市</div>
<div class="t" style="left:639.0px;width:600px;text-align:center;top:692.4000000000001px;font-size:13.6px;color:#5f6369;font-weight:400;">地级</div>
<div class="t" style="left:811.5px;width:600px;text-align:center;top:691.2px;font-size:14px;color:#5f6369;font-weight:400;">N</div>
<div class="a" style="left:1259.7px;top:689.2px;width:49px;height:20px;background:#dcdfe6;border-radius:10px"></div>
<div class="a" style="left:1261.7px;top:691.2px;width:16px;height:16px;background:#fff;border-radius:50%"></div>
<div class="t" style="left:1284.1000000000001px;top:692.2px;font-size:14px;color:#fff;font-weight:400;">否</div>
<div class="a" style="left:1422.8px;top:689.2px;width:68px;height:20px;background:#1890ff;border-radius:10px"></div>
<div class="a" style="left:1472.8px;top:691.2px;width:16px;height:16px;background:#fff;border-radius:50%"></div>
<div class="t" style="left:1433.8px;top:692.2px;font-size:14px;color:#fff;font-weight:400;">开通</div>
<div class="a" style="left:1667px;top:682.7px;width:74px;height:31px;background:#ff4d50;border-radius:3px"></div>
<div class="t" style="left:1701px;top:692.7px;font-size:12px;color:#fff;font-weight:400;">删除</div>
<div class="a" style="left:298px;top:738.55px;width:13px;height:13px;background:#fff;border:1px solid #dcdfe6;border-radius:2px"></div>
<div class="t" style="left:120.0px;width:600px;text-align:center;top:738.05px;font-size:14px;color:#5f6369;font-weight:400;">1</div>
<div class="t" style="left:293.0px;width:600px;text-align:center;top:739.25px;font-size:13.6px;color:#5f6369;font-weight:400;">广西壮族自治区</div>
<div class="t" style="left:466.0px;width:600px;text-align:center;top:739.25px;font-size:13.6px;color:#5f6369;font-weight:400;">广西壮族自治区</div>
<div class="t" style="left:639.0px;width:600px;text-align:center;top:739.25px;font-size:13.6px;color:#5f6369;font-weight:400;">省级</div>
<div class="t" style="left:811.5px;width:600px;text-align:center;top:738.05px;font-size:14px;color:#5f6369;font-weight:400;">G</div>
<div class="a" style="left:1259.7px;top:736.05px;width:49px;height:20px;background:#dcdfe6;border-radius:10px"></div>
<div class="a" style="left:1261.7px;top:738.05px;width:16px;height:16px;background:#fff;border-radius:50%"></div>
<div class="t" style="left:1284.1000000000001px;top:739.05px;font-size:14px;color:#fff;font-weight:400;">否</div>
<div class="a" style="left:1422.8px;top:736.05px;width:68px;height:20px;background:#1890ff;border-radius:10px"></div>
<div class="a" style="left:1472.8px;top:738.05px;width:16px;height:16px;background:#fff;border-radius:50%"></div>
<div class="t" style="left:1433.8px;top:739.05px;font-size:14px;color:#fff;font-weight:400;">开通</div>
<div class="a" style="left:1667px;top:729.55px;width:74px;height:31px;background:#ff4d50;border-radius:3px"></div>
<div class="t" style="left:1701px;top:739.55px;font-size:12px;color:#fff;font-weight:400;">删除</div>
<svg class="a" style="left:0px;top:0px;" width="1776" height="813" viewBox="0 0 1776 813" fill="none"><g stroke="#fff" stroke-width="1.2" fill="none"><path d="M1682.3 299.7 H1692.7 M1685.2 299.7 V298.1 H1689.8 V299.7"/><rect x="1683.5" y="299.7" width="8" height="8.6"/><path d="M1686.2 302.0 V306.0 M1688.8 302.0 V306.0" stroke-width="1"/></g><g stroke="#fff" stroke-width="1.2" fill="none"><path d="M1682.3 360.45 H1692.7 M1685.2 360.45 V358.85 H1689.8 V360.45"/><rect x="1683.5" y="360.45" width="8" height="8.6"/><path d="M1686.2 362.75 V366.75 M1688.8 362.75 V366.75" stroke-width="1"/></g><g stroke="#fff" stroke-width="1.2" fill="none"><path d="M1682.3 414.09999999999997 H1692.7 M1685.2 414.09999999999997 V412.5 H1689.8 V414.09999999999997"/><rect x="1683.5" y="414.09999999999997" width="8" height="8.6"/><path d="M1686.2 416.4 V420.4 M1688.8 416.4 V420.4" stroke-width="1"/></g><g stroke="#fff" stroke-width="1.2" fill="none"><path d="M1682.3 460.90000000000003 H1692.7 M1685.2 460.90000000000003 V459.30000000000007 H1689.8 V460.90000000000003"/><rect x="1683.5" y="460.90000000000003" width="8" height="8.6"/><path d="M1686.2 463.20000000000005 V467.20000000000005 M1688.8 463.20000000000005 V467.20000000000005" stroke-width="1"/></g><g stroke="#fff" stroke-width="1.2" fill="none"><path d="M1682.3 507.7 H1692.7 M1685.2 507.7 V506.1 H1689.8 V507.7"/><rect x="1683.5" y="507.7" width="8" height="8.6"/><path d="M1686.2 510.0 V514.0 M1688.8 510.0 V514.0" stroke-width="1"/></g><g stroke="#fff" stroke-width="1.2" fill="none"><path d="M1682.3 554.5 H1692.7 M1685.2 554.5 V552.9 H1689.8 V554.5"/><rect x="1683.5" y="554.5" width="8" height="8.6"/><path d="M1686.2 556.8 V560.8 M1688.8 556.8 V560.8" stroke-width="1"/></g><g stroke="#fff" stroke-width="1.2" fill="none"><path d="M1682.3 601.3000000000001 H1692.7 M1685.2 601.3000000000001 V599.7 H1689.8 V601.3000000000001"/><rect x="1683.5" y="601.3000000000001" width="8" height="8.6"/><path d="M1686.2 603.6 V607.6 M1688.8 603.6 V607.6" stroke-width="1"/></g><g stroke="#fff" stroke-width="1.2" fill="none"><path d="M1682.3 648.1 H1692.7 M1685.2 648.1 V646.5 H1689.8 V648.1"/><rect x="1683.5" y="648.1" width="8" height="8.6"/><path d="M1686.2 650.4 V654.4 M1688.8 650.4 V654.4" stroke-width="1"/></g><g stroke="#fff" stroke-width="1.2" fill="none"><path d="M1682.3 694.9000000000001 H1692.7 M1685.2 694.9000000000001 V693.3000000000001 H1689.8 V694.9000000000001"/><rect x="1683.5" y="694.9000000000001" width="8" height="8.6"/><path d="M1686.2 697.2 V701.2 M1688.8 697.2 V701.2" stroke-width="1"/></g><g stroke="#fff" stroke-width="1.2" fill="none"><path d="M1682.3 741.75 H1692.7 M1685.2 741.75 V740.15 H1689.8 V741.75"/><rect x="1683.5" y="741.75" width="8" height="8.6"/><path d="M1686.2 744.05 V748.05 M1688.8 744.05 V748.05" stroke-width="1"/></g></svg>
<div class="t" style="left:864px;top:788.2px;font-size:13.2px;color:#5f6369;font-weight:400;">共 10 条</div>
<div class="a" style="left:926px;top:781.4px;width:97px;height:26.2px;background:#fff;border:1px solid #dcdfe6;border-radius:3px"></div>
<div class="t" style="left:944.3px;top:788.2px;font-size:13.2px;color:#5f6369;font-weight:400;">20条/页</div>
<div class="a" style="left:1042.8px;top:781.4px;width:29.6px;height:26.2px;background:#f4f4f5;border-radius:2px"></div>
<div class="a" style="left:1082.3px;top:781.4px;width:29px;height:26.2px;background:#1890ff;border-radius:2px"></div>
<div class="a" style="left:1121px;top:781.4px;width:29.4px;height:26.2px;background:#f4f4f5;border-radius:2px"></div>
<div class="t" style="left:796.8px;width:600px;text-align:center;top:788.6px;font-size:13.5px;color:#fff;font-weight:400;">1</div>
<div class="t" style="left:1178px;top:788.2px;font-size:13px;color:#5f6369;font-weight:400;">前往</div>
<div class="a" style="left:1208px;top:781.4px;width:44.6px;height:26.2px;background:#fff;border:1px solid #dcdfe6;border-radius:3px"></div>
<div class="t" style="left:930.3px;width:600px;text-align:center;top:788.6px;font-size:13.5px;color:#5f6369;font-weight:400;">1</div>
<div class="t" style="left:1256px;top:788.2px;font-size:13px;color:#5f6369;font-weight:400;">页</div>
<svg class="a" style="left:0px;top:0px;" width="1776" height="813" viewBox="0 0 1776 813" fill="none"><g stroke="#b8bcc4" stroke-width="1.1" fill="none"><path d="M1010 792 L1014 796 L1018 792"/><path d="M1060.2 790.4 L1055.6 794.6 L1060.2 798.8"/><path d="M1133.6 790.4 L1138.2 794.6 L1133.6 798.8"/></g></svg>
<div class="t" style="left:1592px;top:800px;font-size:20.5px;color:rgba(150,150,150,0.5);font-weight:400;">激活 Windows</div>
<div class="t" style="left:608.5px;top:181px;font-size:20px;color:#ff1f1f;font-weight:400;letter-spacing:0.5px">添加城市说明：如果只添加到地级市，那么该市所管辖的所有区、县、县级市都能下单</div>
<div class="t" style="left:608.5px;top:208px;font-size:20px;color:#ff1f1f;font-weight:400;letter-spacing:0.5px">如果只添加了该地级市下面的一个区或者县或者县级市，那么只有该区或者该县或者该县级市可以下单</div>
<div class="t" style="left:608.5px;top:262.3px;font-size:20px;color:#ff1f1f;font-weight:400;letter-spacing:0.5px">在该地级市其他的地方无法下单，用户端小程序会提示：城市暂未开放服务</div>
<div class="t" style="left:608.5px;top:317.6px;font-size:20px;color:#ff1f1f;font-weight:400;letter-spacing:0.5px">如果也想在该地级市的其他地方能够下单，就在后台这里添加该地级市管辖下的这个地方</div>
<div class="a" style="left:0px;top:812px;width:1776px;height:1px;background:#1c1c1c"></div>
<div class="a" style="left:1775px;top:0px;width:1px;height:813px;background:#161616"></div>
</body>
</html>
